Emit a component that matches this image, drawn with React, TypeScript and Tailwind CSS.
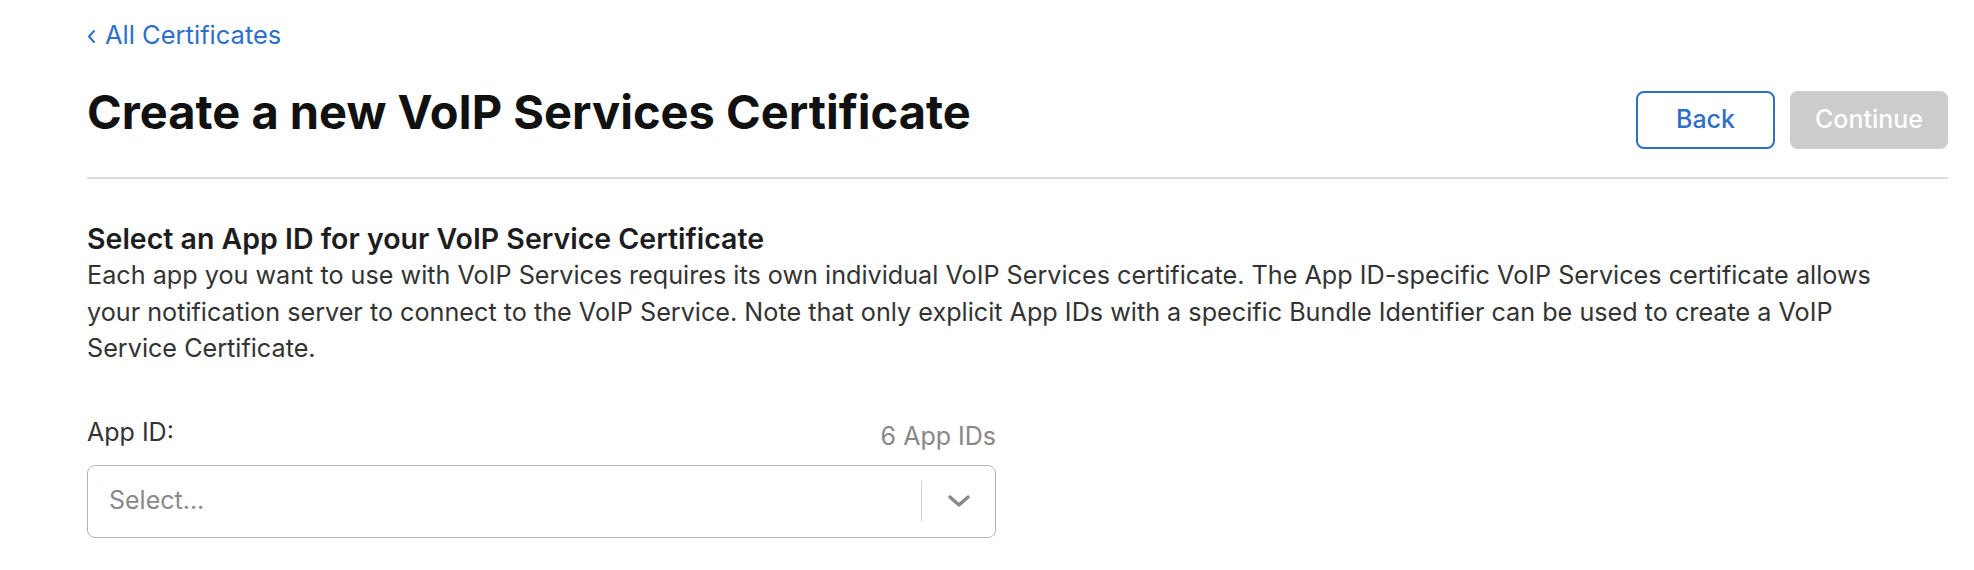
import React from "react";

export default function App() {
  return (
    <div className="w-full h-[570px] bg-white pl-[87px] pr-[26px] font-['Inter','Liberation_Sans',sans-serif] overflow-hidden">
      <div className="pt-[20px]">
        <a className="flex items-center gap-[9px] text-[25.5px] leading-[30px] text-[#2e70c8] w-max">
          <svg width="9" height="15" viewBox="0 0 9 15" className="mt-[3px]">
            <path d="M7 2 L2 7.5 L7 13" fill="none" stroke="#2e70c8" strokeWidth="2" strokeLinecap="round" strokeLinejoin="round" />
          </svg>
          <span>All Certificates</span>
        </a>
      </div>

      <div className="flex justify-between items-start mt-[34px]">
        <h1 className="text-[47px] leading-[56px] font-bold text-[#111111]">
          Create a new VoIP Services Certificate
        </h1>
        <div className="flex gap-[15px] mt-[7px]">
          <button className="w-[139px] h-[58px] rounded-[8px] border-2 border-[#2e70c8] text-[#2e70c8] text-[25px] font-medium">
            Back
          </button>
          <button className="w-[158px] h-[58px] rounded-[8px] bg-[#cccccc] text-white text-[25px] font-medium">
            Continue
          </button>
        </div>
      </div>

      <div className="mt-[28px] h-[2px] bg-[#dddddd]" />

      <div className="mt-[42px]">
        <h2 className="text-[28.5px] leading-[36px] font-semibold text-[#1d1d1f]">
          Select an App ID for your VoIP Service Certificate
        </h2>
        <p className="text-[25.2px] leading-[36.5px] text-[#333333] max-w-[1820px]">
          Each app you want to use with VoIP Services requires its own individual VoIP Services certificate. The App ID-specific VoIP Services certificate allows your notification server to connect to the VoIP Service. Note that only explicit App IDs with a specific Bundle Identifier can be used to create a VoIP Service Certificate.
        </p>

        <div className="w-[909px] mt-[47px]">
          <div className="flex justify-between items-end">
            <span className="text-[25px] leading-[36px] text-[#333333]">App ID:</span>
            <span className="text-[25px] leading-[36px] text-[#888888] translate-y-[4px]">6 App IDs</span>
          </div>
          <div className="mt-[15px] h-[73px] rounded-[8px] border-[1.5px] border-[#b5b5b5] flex items-center">
            <span className="flex-1 pl-[21px] text-[25px] text-[#8a8a8a]">Select...</span>
            <div className="w-[1.5px] h-[40px] bg-[#cfcfcf]" />
            <div className="w-[73px] flex items-center justify-center">
              <svg width="24" height="14" viewBox="0 0 24 14">
                <path d="M3 3 L12 11 L21 3" fill="none" stroke="#8a8a8a" strokeWidth="3.5" strokeLinecap="round" strokeLinejoin="round" />
              </svg>
            </div>
          </div>
        </div>
      </div>
    </div>
  );
}
